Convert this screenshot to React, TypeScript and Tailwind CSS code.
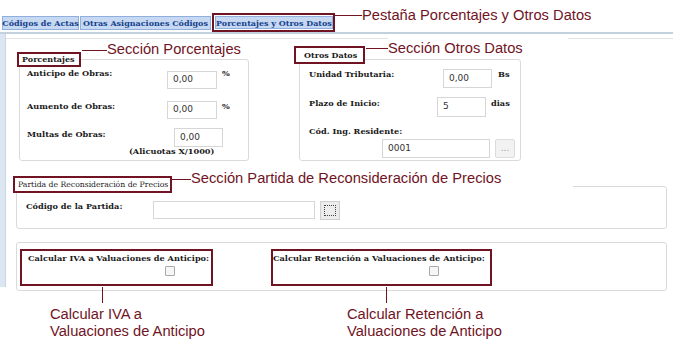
import React from "react";

const serif = "font-['DejaVu_Serif',serif]";
const sans = "font-['DejaVu_Sans',sans-serif]";

function Input({ w, h, mt = 0, value = "" }: { w: number; h: number; mt?: number; value?: string }) {
  return (
    <div
      className={`shrink-0 bg-white border border-[#d6d6d6] flex items-center pl-[5px] text-[9px] text-[#333] ${sans}`}
      style={{ width: w, height: h, marginTop: mt }}
    >
      {value}
    </div>
  );
}

export default function App() {
  const lbl = `text-[8.2px] leading-[10px] font-bold text-[#1a1a1a] whitespace-nowrap ${serif}`;
  const ann = "text-[14.7px] leading-[17px] text-[#701424] font-['Liberation_Sans',Arial,sans-serif] whitespace-nowrap";
  return (
    <div className="relative w-[678px] h-[339px] bg-white overflow-hidden">
      {/* Tabs */}
      <div className="flex items-center pl-[2px] pt-[13px] h-[32px]">
        <div className={`h-[14px] w-[77px] bg-[#c6d8f2] border border-[#8fb0df] flex items-center justify-center text-[8px] font-bold text-[#15428b] whitespace-nowrap ${serif}`}>
          Códigos de Actas
        </div>
        <div className={`ml-[1px] h-[14px] w-[131px] bg-[#c6d8f2] border border-[#8fb0df] flex items-center justify-center text-[8px] font-bold text-[#15428b] whitespace-nowrap ${serif}`}>
          Otras Asignaciones Códigos
        </div>
        <div className="ml-[1px] h-[19px] w-[123px] border-2 border-[#701424] p-[1px] flex">
          <div className={`flex-1 bg-[#c6d8f2] border border-[#8fb0df] flex items-center justify-center text-[8px] font-bold text-[#15428b] whitespace-nowrap ${serif}`}>
            Porcentajes y Otros Datos
          </div>
        </div>
      </div>
      <div className="w-[673px] h-[2px] bg-[#c3d1df]" />

      {/* Panel */}
      <div className="flex w-[673px]">
        <div className="w-[6px] h-[253px] bg-[#dce6f3] border-r border-[#cad6e4]" />
        <div className="flex-1 mt-[4px] border-t border-[#e4e4e4] pl-[10px]">
          {/* Top row */}
          <div className="flex items-start">
            {/* Porcentajes */}
            <div className="ml-[3px] mt-[20px] w-[230px] h-[102px] border border-[#dadada] rounded-[3px] flex flex-col">
              <div className={`-ml-[3px] -mt-[8px] w-[64px] h-[15px] border-2 border-[#701424] bg-white pl-[3px] text-[8px] leading-[11px] font-bold text-[#1a1a1a] ${serif}`}>
                Porcentajes
              </div>
              <div className="flex items-start ml-[7px] mt-[1px]">
                <div className={`${lbl} w-[140px]`}>Anticipo de Obras:</div>
                <Input w={50} h={18} mt={3} value="0,00" />
                <div className={`${lbl} ml-[5px]`}>%</div>
              </div>
              <div className="flex items-start ml-[7px] mt-[12px]">
                <div className={`${lbl} w-[140px]`}>Aumento de Obras:</div>
                <Input w={50} h={18} value="0,00" />
                <div className={`${lbl} ml-[5px]`}>%</div>
              </div>
              <div className="flex items-start ml-[7px] mt-[9px]">
                <div className={`${lbl} w-[147px] mt-[1px]`}>Multas de Obras:</div>
                <Input w={49} h={19} value="0,00" />
              </div>
              <div className={`${lbl} ml-[109px] -mt-[1px]`}>(Alicuotas X/1000)</div>
            </div>

            {/* Otros Datos */}
            <div className="ml-[50px] mt-[20px] w-[222px] h-[102px] border border-[#dadada] rounded-[3px] flex flex-col">
              <div className={`-ml-[6px] -mt-[14px] w-[71px] h-[18px] border-2 border-[#701424] bg-white pl-[8px] text-[8px] leading-[14px] font-bold text-[#1a1a1a] ${serif}`}>
                Otros Datos
              </div>
              <div className="flex items-start ml-[9px] mt-[5px]">
                <div className={`${lbl} w-[134px]`}>Unidad Tributaria:</div>
                <Input w={49} h={19} value="0,00" />
                <div className={`${lbl} ml-[6px]`}>Bs</div>
              </div>
              <div className="flex items-start ml-[9px] mt-[9px]">
                <div className={`${lbl} w-[128px] mt-[1px]`}>Plazo de Inicio:</div>
                <Input w={49} h={20} value="5" />
                <div className={`${lbl} ml-[5px] mt-[1px]`}>dias</div>
              </div>
              <div className={`${lbl} ml-[9px] mt-[9px]`}>Cód. Ing. Residente:</div>
              <div className="flex items-start ml-[82px] mt-[3px]">
                <Input w={108} h={19} value="0001" />
                <div className={`ml-[5px] w-[20px] h-[19px] bg-[#f2f2f2] border border-[#dcdcdc] rounded-[2px] flex items-center justify-center text-[9px] text-[#999] ${sans}`}>
                  ...
                </div>
              </div>
            </div>
          </div>

          {/* Partida */}
          <div className="mt-[25px] w-[651px] h-[43px] border border-[#dadada] rounded-[3px] flex flex-col">
            <div className={`-ml-[4px] -mt-[11px] w-[159px] h-[17px] border-2 border-[#701424] bg-white pl-[3px] text-[7.7px] leading-[13px] text-[#1a1a1a] whitespace-nowrap ${serif}`}>
              Partida de Reconsideración de Precios
            </div>
            <div className="flex items-start ml-[9px] mt-[8px]">
              <div className={`${lbl} w-[127px]`}>Código de la Partida:</div>
              <Input w={162} h={18} />
              <div className="ml-[5px] w-[20px] h-[19px] bg-[#ececec] border border-[#cfcfcf] p-[3px]">
                <div className="w-full h-full border border-dotted border-[#444]" />
              </div>
            </div>
          </div>

          {/* Checkboxes */}
          <div className="mt-[13px] w-[651px] h-[49px] border border-[#dadada] rounded-[3px] flex items-start pt-[6px] pl-[3px]">
            <div className="w-[193px] h-[37px] border-2 border-[#701424] flex flex-col pl-[6px] pt-[2px]">
              <div className={lbl}>Calcular IVA a Valuaciones de Anticipo:</div>
              <div className="ml-[137px] mt-[3px] w-[10px] h-[10px] border border-[#a9a9a9] bg-[#f6f6f6] rounded-[1px]" />
            </div>
            <div className="ml-[58px] w-[221px] h-[37px] border-2 border-[#701424] flex flex-col pt-[2px]">
              <div className={lbl}>Calcular Retención a Valuaciones de Anticipo:</div>
              <div className="ml-[156px] mt-[3px] w-[10px] h-[10px] border border-[#a9a9a9] bg-[#f6f6f6] rounded-[1px]" />
            </div>
          </div>
        </div>
      </div>

      {/* Annotations (callouts over the screenshot) */}
      <div className="absolute left-[334px] top-[15px] w-[28px] h-px bg-[#701424]" />
      <div className={`absolute left-[362px] top-[7px] ${ann}`}>Pestaña Porcentajes y Otros Datos</div>

      <div className="absolute left-[82px] top-[50px] w-[25px] h-px bg-[#701424]" />
      <div className={`absolute left-[107px] top-[41px] w-[180px] bg-white ${ann}`}>Sección Porcentajes</div>

      <div className="absolute left-[366px] top-[48px] w-[22px] h-px bg-[#701424]" />
      <div className={`absolute left-[388px] top-[37px] w-[180px] pt-[3px] bg-white ${ann}`}>Sección Otros Datos</div>

      <div className="absolute left-[172px] top-[179px] w-[19px] h-[11px] bg-white border-t border-[#701424]" />
      <div className={`absolute left-[191px] top-[168px] w-[382px] h-[22px] pt-[2px] bg-white ${ann}`}>
        Sección Partida de Reconsideración de Precios
      </div>

      <div className="absolute left-[102px] top-[287px] w-px h-[16px] bg-[#701424]" />
      <div className={`absolute left-[50px] top-[306px] ${ann}`}>
        Calcular IVA a<br />Valuaciones de Anticipo
      </div>

      <div className="absolute left-[386px] top-[287px] w-px h-[16px] bg-[#701424]" />
      <div className={`absolute left-[347px] top-[306px] ${ann}`}>
        Calcular Retención a<br />Valuaciones de Anticipo
      </div>
    </div>
  );
}
